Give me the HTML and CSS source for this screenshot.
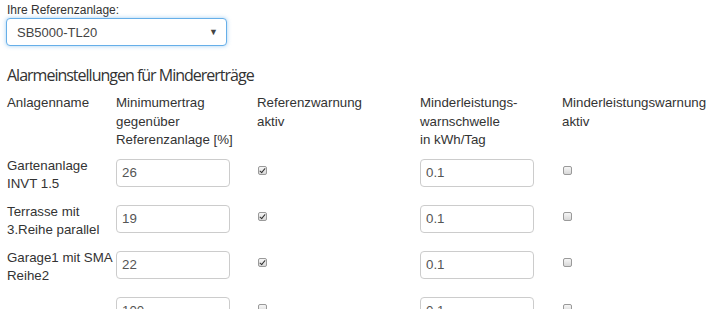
FILE: index.html
```html
<!DOCTYPE html>
<html lang="de">
<head>
    <meta charset="UTF-8">
    <meta name="viewport" content="width=device-width, initial-scale=1.0">
    <title>Alarmeinstellungen</title>
    <link rel="stylesheet" href="styles.css">
</head>
<body>
    <div class="page">
        <label class="ref-label" for="reference">Ihre Referenzanlage:</label>
        <div class="select-wrap">
            <select id="reference">
                <option>SB5000-TL20</option>
            </select>
            <span class="caret">&#9660;</span>
        </div>

        <h2>Alarmeinstellungen für Mindererträge</h2>

        <table class="alarms">
            <colgroup>
                <col class="c-name">
                <col class="c-min">
                <col class="c-ref">
                <col class="c-limit">
                <col>
            </colgroup>
            <thead>
                <tr>
                    <th>Anlagenname</th>
                    <th>Minimumertrag<br>gegenüber<br>Referenzanlage [%]</th>
                    <th>Referenzwarnung<br>aktiv</th>
                    <th>Minderleistungs-<br>warnschwelle<br>in kWh/Tag</th>
                    <th>Minderleistungswarnung<br>aktiv</th>
                </tr>
            </thead>
            <tbody>
                <tr>
                    <td class="name">Gartenanlage INVT 1.5</td>
                    <td><input type="text" value="26"></td>
                    <td><input type="checkbox" checked></td>
                    <td><input type="text" value="0.1"></td>
                    <td><input type="checkbox"></td>
                </tr>
                <tr>
                    <td class="name">Terrasse mit 3.Reihe parallel</td>
                    <td><input type="text" value="19"></td>
                    <td><input type="checkbox" checked></td>
                    <td><input type="text" value="0.1"></td>
                    <td><input type="checkbox"></td>
                </tr>
                <tr>
                    <td class="name">Garage1 mit SMA Reihe2</td>
                    <td><input type="text" value="22"></td>
                    <td><input type="checkbox" checked></td>
                    <td><input type="text" value="0.1"></td>
                    <td><input type="checkbox"></td>
                </tr>
                <tr>
                    <td class="name"></td>
                    <td><input type="text" value="100"></td>
                    <td><input type="checkbox"></td>
                    <td><input type="text" value="0.1"></td>
                    <td><input type="checkbox"></td>
                </tr>
            </tbody>
        </table>
    </div>
</body>
</html>
```

FILE: styles.css
```css
body {
    margin: 0;
    padding: 0;
    font-family: "Liberation Sans", Arial, sans-serif;
    font-size: 13.3px;
    line-height: 18.5px;
    color: #333;
    background: #fff;
    overflow: hidden;
}

.page {
    padding: 2px 7px 0 7px;
}

.ref-label {
    display: block;
    font-size: 12px;
    line-height: 16px;
}

.select-wrap {
    position: relative;
    width: 221px;
    margin-left: -1px;
}

.select-wrap select {
    appearance: none;
    -webkit-appearance: none;
    display: block;
    width: 100%;
    height: 28px;
    padding: 0 10px;
    border: 1px solid #66afe9;
    border-radius: 4px;
    box-shadow: 0 0 4px rgba(102, 175, 233, 0.6);
    background: #fff;
    font-family: inherit;
    font-size: 13px;
    color: #444;
    outline: none;
}

.caret {
    position: absolute;
    right: 9px;
    top: 9px;
    font-size: 9px;
    line-height: 10px;
    color: #444;
    pointer-events: none;
}

h2 {
    margin: 19px 0 0 0;
    font-family: "Open Sans", sans-serif;
    font-size: 16px;
    font-weight: 500;
    letter-spacing: -1px;
    line-height: 20px;
    color: #333;
}

.alarms {
    margin-top: 9px;
    border-collapse: collapse;
    table-layout: fixed;
    width: 711px;
}

.c-name { width: 109px; }
.c-min { width: 141px; }
.c-ref { width: 163px; }
.c-limit { width: 142px; }

.alarms th {
    font-weight: normal;
    text-align: left;
    vertical-align: top;
    padding: 0 0 7px 0;
}

.alarms td {
    height: 46px;
    padding: 0;
    vertical-align: top;
    box-sizing: border-box;
}

.alarms td.name {
    padding-right: 2px;
}

.alarms input[type="text"] {
    box-sizing: border-box;
    display: block;
    width: 114px;
    height: 28px;
    margin-top: 2px;
    padding: 0 5px;
    border: 1px solid #ccc;
    border-radius: 4px;
    font-family: inherit;
    font-size: 13.3px;
    color: #555;
    background: #fff;
}

.alarms input[type="checkbox"] {
    appearance: none;
    -webkit-appearance: none;
    position: relative;
    display: block;
    width: 9px;
    height: 9px;
    margin: 9px 0 0 1px;
    border: 1px solid #9a9a9a;
    border-radius: 2px;
    background: linear-gradient(#f6f6f6, #d8d8d8);
}

.alarms input[type="checkbox"]:checked::after {
    content: "";
    position: absolute;
    left: 2px;
    top: 0px;
    width: 2px;
    height: 5px;
    border-right: 1.5px solid #333;
    border-bottom: 1.5px solid #333;
    transform: rotate(40deg);
}
```
